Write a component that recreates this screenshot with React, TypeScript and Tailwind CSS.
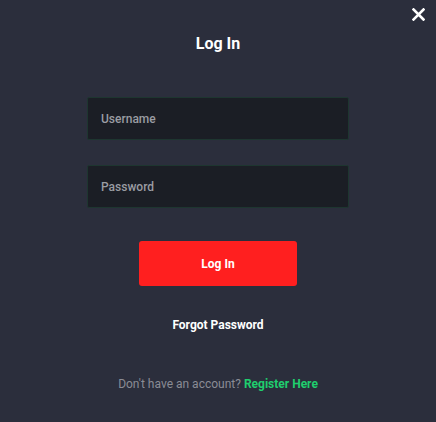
import React from "react";

export default function App() {
  return (
    <div
      className="relative w-[436px] h-[422px] bg-[#2b2e3c] flex flex-col items-center"
      style={{ fontFamily: "Roboto, 'Liberation Sans', sans-serif" }}
    >
      <button className="absolute right-[10px] top-[6px] w-[16px] h-[16px] flex items-center justify-center">
        <svg width="13" height="13" viewBox="0 0 13 13">
          <path d="M1.5 1.5 L11.5 11.5 M11.5 1.5 L1.5 11.5" stroke="#ffffff" strokeWidth="2.6" strokeLinecap="square" />
        </svg>
      </button>
      <h1 className="mt-[32px] text-[16px] leading-[24px] font-bold text-white">Log In</h1>
      <div className="mt-[41px] w-[262px] flex flex-col gap-[25px]">
        <div className="h-[43px] rounded-[2px] bg-[#1b1e25] border border-[#1e3630] flex items-center px-[13px]">
          <span className="text-[12px] font-medium text-[#9a9ca2]">Username</span>
        </div>
        <div className="h-[43px] rounded-[2px] bg-[#1b1e25] border border-[#1e3630] flex items-center px-[13px]">
          <span className="text-[12px] font-medium text-[#9a9ca2]">Password</span>
        </div>
      </div>
      <button className="mt-[33px] w-[158px] h-[45px] rounded-[3px] bg-[#ff1f1f] text-white text-[12px] font-bold">
        Log In
      </button>
      <div className="mt-[31px] text-[12px] leading-[16px] font-bold text-white">Forgot Password</div>
      <div className="mt-[43px] text-[12px] leading-[16px] text-[#8a8c95]">
        Don't have an account? <span className="font-bold text-[#1fce6e]">Register Here</span>
      </div>
    </div>
  );
}
